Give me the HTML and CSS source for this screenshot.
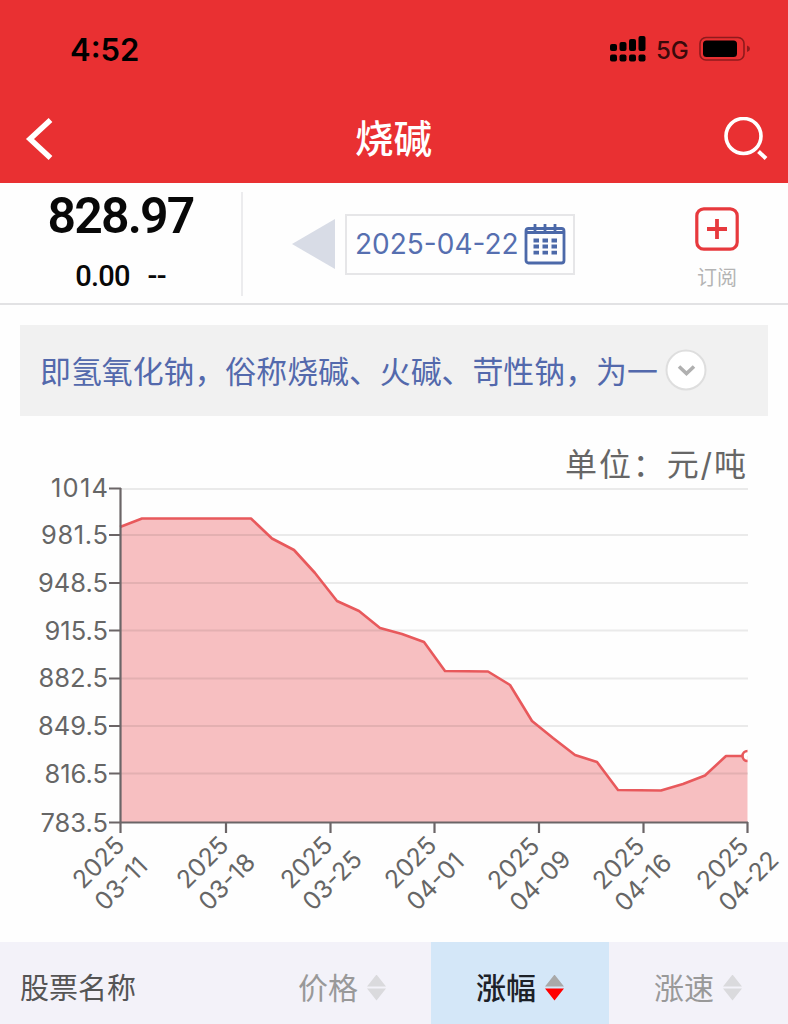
FILE: index.html
```html
<!DOCTYPE html>
<html lang="zh-CN">
<head>
<meta charset="UTF-8">
<title>烧碱</title>
<link rel="stylesheet" href="styles.css">
</head>
<body>
	<div class="header">
		<div class="status">
			<span class="time">4:52</span>
			<svg class="signal" width="37" height="26" viewBox="0 0 37 26">
				<rect x="0" y="8" width="7" height="7" rx="2"/>
				<rect x="9.500" y="6" width="7" height="9" rx="2"/>
				<rect x="19" y="3" width="7" height="12" rx="2"/>
				<rect x="28.500" y="0" width="7" height="15" rx="2"/>
				<rect x="0" y="18.500" width="7" height="7" rx="2"/>
				<rect x="9.500" y="18.500" width="7" height="7" rx="2"/>
				<rect x="19" y="18.500" width="7" height="7" rx="2"/>
				<rect x="28.500" y="18.500" width="7" height="7" rx="2"/>
			</svg>
			<span class="net">5G</span>
			<svg class="battery" width="52" height="26" viewBox="0 0 52 26">
				<rect x="1" y="1.500" width="44" height="22.500" rx="6" fill="none" stroke="#8f1a1c" stroke-width="1.600"/>
				<rect x="4" y="4.500" width="34" height="16.500" rx="3.500"/>
				<path d="M48 9.500v6.500q3-1 3-3.200t-3-3.300z" fill="#8f1a1c"/>
			</svg>
		</div>
		<div class="nav">
			<svg class="back" width="30" height="44" viewBox="0 0 30 44">
				<path d="M25.500 3L5 22l20.500 19" fill="none" stroke="#fff" stroke-width="5.500"/>
			</svg>
			<h1>烧碱</h1>
			<svg class="search" width="44" height="44" viewBox="0 0 44 44" fill="none" stroke="#fff">
				<circle cx="19.500" cy="19" r="17.500" stroke-width="3.600"/>
				<path d="M34.500 34.500l7.500 7" stroke-width="4"/>
			</svg>
		</div>
	</div>

	<div class="quote">
		<div class="price">
			<div class="now">828.97</div>
			<div class="change"><span>0.00</span><span>--</span></div>
		</div>
		<div class="date">
			<svg width="43" height="50" viewBox="0 0 43 50"><path d="M0 25L43 0v50z" fill="#d8dce6"/></svg>
			<div class="picker">
				<span>2025-04-22</span>
				<svg width="42" height="42" viewBox="0 0 42 42" fill="none" stroke="#4c69a9">
					<rect x="2" y="5.500" width="38" height="34.500" rx="2.500" stroke-width="2.800"/>
					<path d="M2 9.500h38M11 1v9M21 1v9M31 1v9" stroke-width="2.800"/>
					<path d="M9.500 17.500h24M9.500 23.500h24M9.500 29.700h24" stroke-width="3.800" stroke-dasharray="5.500 3.500"/>
				</svg>
			</div>
		</div>
		<div class="subscribe">
			<svg width="44" height="44" viewBox="0 0 44 44" fill="none" stroke="#e7393d">
				<rect x="1.800" y="1.800" width="40.400" height="40.400" rx="7" stroke-width="3.200"/>
				<path d="M12 22h20M22 12v20" stroke-width="3.800"/>
			</svg>
			<span>订阅</span>
		</div>
	</div>

	<div class="intro">
		<span>即氢氧化钠，俗称烧碱、火碱、苛性钠，为一</span>
		<svg class="more" width="42" height="42" viewBox="0 0 42 42">
			<circle cx="21" cy="21" r="19.500" fill="#fff" stroke="#dedede" stroke-width="2"/>
			<path d="M14 17.500l7.500 7 7.500-7" fill="none" stroke="#b0b0b0" stroke-width="3.600"/>
		</svg>
	</div>

	<svg class="chart" width="788" height="526" viewBox="0 416 788 526">
		<text class="unit" x="565" y="476" textLength="181">单位：元/吨</text>
		<path class="area" d="M120 527L142 518.500H251L272 538.500L294 550L315 573L337 601L359 611L380 628L402 634L424 642L445 671L488 671.500L510 685L532 721L553 738L575 755L597 762L618 790L661 790.500L683 784L705 775.500L726 756H747.500V822H120z"/>
		<path class="grid" d="M121 489H748M121 535H748M121 583H748M121 630.500H748M121 678.500H748M121 726H748M121 773.500H748"/>
		<path class="line" d="M120 527L142 518.500H251L272 538.500L294 550L315 573L337 601L359 611L380 628L402 634L424 642L445 671L488 671.500L510 685L532 721L553 738L575 755L597 762L618 790L661 790.500L683 784L705 775.500L726 756H743"/>
		<path class="dot" d="M747.500 751A5 5 0 0 0 747.500 761"/>
		<path class="axis" d="M120.500 488V833M109 822.500H748M109 488.500H121M109 535H121M109 583H121M109 630.500H121M109 678.500H121M109 726H121M109 773.500H121M226 822V833M330.500 822V833M434.500 822V833M539 822V833M643.500 822V833M747.500 822V833"/>
		<g class="ylabel">
			<text x="108" y="497" textLength="57">1014</text>
			<text x="108" y="544" textLength="67">981.5</text>
			<text x="108" y="592">948.5</text>
			<text x="108" y="640">915.5</text>
			<text x="108" y="687">882.5</text>
			<text x="108" y="735">849.5</text>
			<text x="108" y="783">816.5</text>
			<text x="108" y="832">783.5</text>
		</g>
		<g class="xlabel">
			<g transform="translate(83 890) rotate(-45)"><text>2025</text><text y="31">03-11</text></g>
			<g transform="translate(187 890) rotate(-45)"><text>2025</text><text y="31">03-18</text></g>
			<g transform="translate(291 890) rotate(-45)"><text>2025</text><text y="31">03-25</text></g>
			<g transform="translate(395 890) rotate(-45)"><text>2025</text><text y="31">04-01</text></g>
			<g transform="translate(498 891) rotate(-45)"><text>2025</text><text y="31">04-09</text></g>
			<g transform="translate(603 891) rotate(-45)"><text>2025</text><text y="31">04-16</text></g>
			<g transform="translate(707 891) rotate(-45)"><text>2025</text><text y="31">04-22</text></g>
		</g>
	</svg>

	<div class="thead">
		<div class="name">股票名称</div>
		<div class="col"><span>价格</span><i class="sort"></i></div>
		<div class="col active"><span>涨幅</span><i class="sort"></i></div>
		<div class="col"><span>涨速</span><i class="sort"></i></div>
	</div>
</body>
</html>
```
FILE: styles.css
```css
*{
	box-sizing:border-box;
}
body{
	margin:0;
	width:788px;
	height:1024px;
	overflow:hidden;
	background:#fefefe;
	font-family:Inter,"Noto Sans CJK SC",sans-serif;
}
svg{
	display:block;
	flex:none;
}
.header{
	height:183px;
	background:#e93032;
}
.status{
	display:flex;
	align-items:center;
	height:98px;
	padding:0 37px 0 70px;
}
.time{
	flex:1;
	font-size:31px;
	font-weight:600;
	line-height:40px;
	padding-top:2px;
}
.net{
	width:34px;
	margin:3px 9px 0 9px;
	font-size:24px;
	font-weight:500;
	color:#3a0a0b;
}
.nav{
	display:flex;
	align-items:center;
	justify-content:space-between;
	height:82px;
	padding:0 20px 0 25px;
}
.nav h1{
	margin:0 0 0 8px;
	font-size:38.5px;
	font-weight:500;
	line-height:50px;
	color:#fff;
}
.quote{
	display:flex;
	height:122px;
	padding:9px 0 7px;
	border-bottom:2px solid #e2e2e4;
}
.price{
	width:243px;
	border-right:2px solid #ececee;
	text-align:center;
	font-family:Roboto,sans-serif;
	color:#080808;
}
.now{
	font-size:50px;
	font-weight:600;
	letter-spacing:-1.8px;
	line-height:48px;
}
.change{
	display:flex;
	justify-content:center;
	gap:18px;
	margin-top:19px;
	font-size:29px;
	font-weight:500;
	letter-spacing:-0.8px;
	line-height:34px;
}
.date{
	display:flex;
	align-items:center;
	width:434px;
	padding-left:49px;
}
.picker{
	display:flex;
	align-items:center;
	justify-content:space-between;
	width:230px;
	height:61px;
	margin-left:10px;
	padding:0 7px 0 8px;
	border:2px solid #e6e6e8;
	font-size:28px;
	color:#566fb0;
}
.subscribe{
	display:flex;
	flex-direction:column;
	align-items:center;
	width:80px;
	padding-top:15px;
	font-size:20px;
	line-height:28px;
	color:#b4b4b4;
}
.subscribe span{
	margin-top:13px;
}
.intro{
	display:flex;
	align-items:center;
	height:91px;
	margin:20px 20px 0;
	padding:0 0 3px 20px;
	background:#f1f1f1;
	font-size:30.9px;
	white-space:nowrap;
	color:#5369ac;
}
.more{
	margin:1px 0 0 7px;
}
.unit{
	font-size:32px;
	fill:#666;
}
.area{
	fill:#f7bfc1;
}
.grid{
	fill:none;
	stroke:rgba(0,0,0,.08);
	stroke-width:2;
}
.line,.dot{
	fill:none;
	stroke:#e8595c;
	stroke-width:2.6;
	stroke-linejoin:round;
}
.dot{
	fill:#fff;
}
.axis{
	fill:none;
	stroke:#6b6567;
	stroke-width:2.2;
}
.ylabel,.xlabel{
	font-size:25.5px;
	fill:#666;
}
.ylabel{
	text-anchor:end;
}
.xlabel{
	font-size:24.8px;
}
.thead{
	display:flex;
	height:82px;
	background:#f3f2f9;
	font-size:29px;
	line-height:94px;
}
.name{
	width:253px;
	padding-left:20px;
	color:#555;
}
.col{
	display:flex;
	align-items:center;
	justify-content:center;
	width:178px;
	font-size:30px;
	line-height:40px;
	color:#999;
}
.col span{
	margin-top:9px;
}
.sort{
	width:19px;
	height:26px;
	margin:9px 0 0 9px;
	background:#dadadd;
	clip-path:polygon(50% 0,100% 46%,0 46%,0 54%,100% 54%,50% 100%,0 54%,0 46%);
}
.active{
	background:#d4e7f8;
	color:#1c2128;
	font-weight:500;
}
.active .sort{
	background:linear-gradient(#a9a9a9 50%,#f00 50%);
}
```
